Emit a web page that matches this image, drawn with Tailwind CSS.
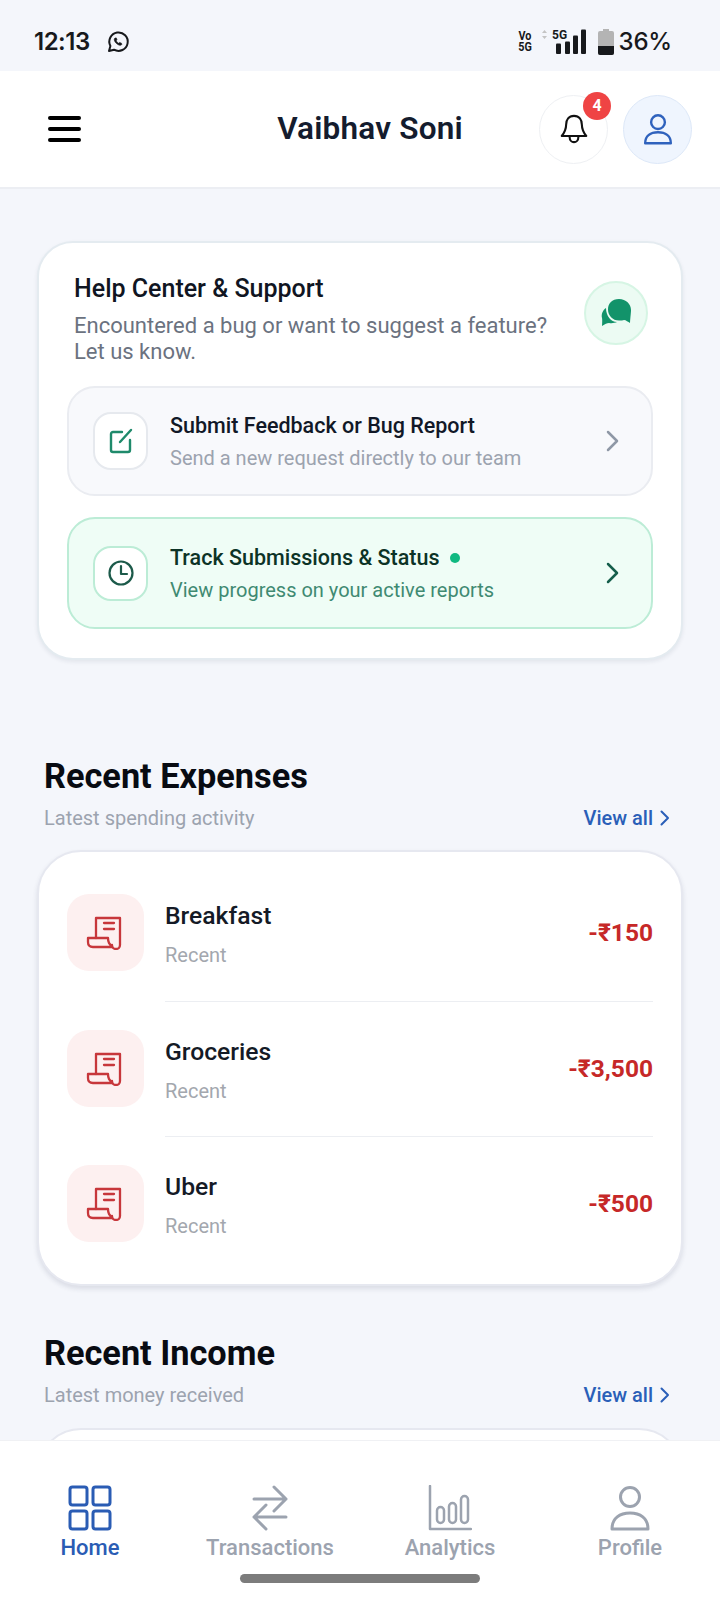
<!DOCTYPE html>
<html>
<head>
<meta charset="utf-8">
<script src="https://cdn.jsdelivr.net/npm/@tailwindcss/browser@4"></script>
</head>
<body class="m-0">
<div class="w-[720px] h-[1600px] flex flex-col overflow-hidden bg-[#f4f6fb] font-['Roboto',sans-serif]">
  <!-- status bar -->
  <div class="h-[71px] shrink-0 flex items-center justify-between pl-[34px] pr-[48px] pt-[12px] text-[#17191c]">
    <div class="flex items-center gap-[16px]">
      <span class="text-[24px] font-semibold font-['Inter',sans-serif] tracking-[-0.5px]">12:13</span>
      <svg width="24" height="24" viewBox="0 0 24 24" fill="none" stroke="#17191c" stroke-width="2"><path d="M3 21l1.400-5A9.200 9.200 0 1 1 8 19.700L3 21z" stroke-linejoin="round"/><path d="M9 8c-.8.6-1 1.600-.4 3 .7 1.600 2.300 3.200 4.200 4 1.300.5 2.400.3 3-.6l-.3-1.200-1.900-.8-.9.9c-1-.4-2-1.400-2.500-2.500l.8-1-.7-1.900z" fill="#17191c" stroke-width=".6"/></svg>
    </div>
    <div class="flex items-center">
      <div class="flex flex-col items-center text-[12px] leading-[11px] font-bold w-[14px] mr-[7px] scale-x-90"><span>Vo</span><span>5G</span></div>
      <svg width="48" height="30" viewBox="0 0 48 30" class="mr-[11px]"><path d="M3 6l2.500-3L8 6zM3 9l2.500 3L8 9z" fill="#c4c4c4"/><text x="13" y="11.500" font-size="12" font-weight="700" font-family="Roboto" fill="#17191c">5G</text><rect x="17" y="16.500" width="5" height="10.500" rx="1" fill="#17191c"/><rect x="26" y="14.500" width="5" height="12.500" rx="1" fill="#17191c"/><rect x="34" y="8.500" width="5" height="18.500" rx="1" fill="#17191c"/><rect x="42" y="2.500" width="5" height="24.500" rx="1" fill="#17191c"/></svg>
      <svg width="16" height="26" viewBox="0 0 16 26" class="mr-[5px]"><path d="M5 0h6v2h3a2 2 0 0 1 2 2v20a2 2 0 0 1-2 2H2a2 2 0 0 1-2-2V4a2 2 0 0 1 2-2h3z" fill="#b4b4b4"/><path d="M0 17h16v7a2 2 0 0 1-2 2H2a2 2 0 0 1-2-2z" fill="#17191c"/></svg>
      <span class="text-[24px] font-medium font-['Inter',sans-serif] tracking-[-0.2px]">36%</span>
    </div>
  </div>
  <!-- header -->
  <div class="h-[118px] shrink-0 bg-white border-b-2 border-[#eceef3] flex items-center pl-[48px] pr-[28px]">
    <div class="flex-1 min-w-0"><div class="w-[33px] flex flex-col gap-[7px]"><div class="h-[4px] rounded-full bg-black"></div><div class="h-[4px] rounded-full bg-black"></div><div class="h-[4px] rounded-full bg-black"></div></div></div>
    <div class="text-[31.500px] font-semibold text-[#141c2e] tracking-[0.2px] shrink-0">Vaibhav Soni</div>
    <div class="flex-1 min-w-0 flex items-center justify-end gap-[15px]">
      <div class="relative w-[69px] h-[69px] rounded-full bg-white border border-[#eef0f3] flex items-center justify-center shrink-0">
        <svg width="28" height="32" viewBox="0 0 32 34" fill="none" stroke="#111" stroke-width="2.400" stroke-linejoin="round" stroke-linecap="round"><path d="M16 2c-6 0-9 4.500-9 10 0 6-2 9-5 13h28c-3-4-5-7-5-13 0-5.500-3-10-9-10z"/><path d="M11 26c0 4 2.500 6 5 6s5-2 5-6"/></svg>
        <div class="absolute top-[-4px] right-[-4px] w-[28px] h-[28px] rounded-full bg-[#ef4444] flex items-center justify-center text-white text-[16px] font-bold">4</div>
      </div>
      <div class="w-[69px] h-[69px] rounded-full bg-[#eff5fe] border border-[#dde8f8] flex items-center justify-center shrink-0">
        <svg width="30" height="33" viewBox="0 0 32 36" fill="none" stroke="#2f62bd" stroke-width="2.600" stroke-linejoin="round"><circle cx="16" cy="10" r="7.500"/><path d="M2 33c0-8 6-12 14-12s14 4 14 12z"/></svg>
      </div>
    </div>
  </div>
  <!-- main -->
  <div class="flex-1 min-h-0 overflow-hidden px-[37px] pt-[52px]">
    <div class="h-[419px] w-[646px] rounded-[36px] bg-white border-2 border-[#e4ebf0] shadow-[0_2px_4px_rgba(30,40,70,0.08)] px-[28px] pt-[30px]">
      <div class="flex justify-between pl-[7px] pr-[5px]">
        <div>
          <div class="text-[25px] leading-[32px] font-medium text-[#101522]">Help Center &amp; Support</div>
          <div class="text-[22px] leading-[26px] text-[#6b7280] mt-[8px]">Encountered a bug or want to suggest a feature?<br>Let us know.</div>
        </div>
        <div class="w-[64px] h-[64px] mt-[8px] rounded-full bg-[#ecfbf3] border-2 border-[#d6f5e4] flex items-center justify-center">
          <svg width="32" height="30" viewBox="0 0 32 30"><path d="M6 10c-3 2-5 6-4 10 .3 1 .3 4 0 8 3-2 5-3 7-3 3 .5 6 0 8-1-6 0-11-6-11-14z" fill="#12936a"/><path d="M19 1c7 0 12 5 12 11 0 3-.5 6-1 13-2-1-4-3-6-3-1 .5-3 .5-5 .5-6.500 0-11-5-11-11S12 1 19 1z" fill="#12936a"/></svg>
        </div>
      </div>
      <div class="mt-[21px] h-[110px] rounded-[28px] bg-[#f8f9fc] border-2 border-[#eaecf1] flex items-center pl-[24px] pr-[31px]">
        <div class="w-[55px] h-[58px] rounded-[18px] bg-white border-2 border-[#e6e9ee] flex items-center justify-center shrink-0">
          <svg width="28" height="28" viewBox="0 0 28 28" fill="none" stroke="#1f8a6b" stroke-width="2.400" stroke-linecap="round" stroke-linejoin="round"><path d="M15 5H6a2 2 0 0 0-2 2v16a2 2 0 0 0 2 2h15a2 2 0 0 0 2-2V13"/><path d="M13 15L24 3"/></svg>
        </div>
        <div class="ml-[22px] flex-1">
          <div class="text-[21.500px] leading-[26px] font-medium text-[#111827]">Submit Feedback or Bug Report</div>
          <div class="text-[20px] leading-[24px] text-[#9ca3af] mt-[7px]">Send a new request directly to our team</div>
        </div>
        <svg width="14" height="22" viewBox="0 0 14 22" fill="none" stroke="#8f98a6" stroke-width="2.500" stroke-linecap="round" stroke-linejoin="round"><path d="M2 2l9 9-9 9"/></svg>
      </div>
      <div class="mt-[21px] h-[112px] rounded-[28px] bg-[#effdf6] border-2 border-[#bcecd6] flex items-center pl-[24px] pr-[31px]">
        <div class="w-[55px] h-[55px] rounded-[18px] bg-white border-2 border-[#bcecd6] flex items-center justify-center shrink-0">
          <svg width="28" height="28" viewBox="0 0 28 28" fill="none" stroke="#1c5a4a" stroke-width="2.200" stroke-linecap="round" stroke-linejoin="round"><circle cx="14" cy="14" r="11.500"/><path d="M14 7v8h6"/></svg>
        </div>
        <div class="ml-[22px] flex-1">
          <div class="flex items-center text-[21.500px] leading-[26px] font-medium text-[#0c3326]">Track Submissions &amp; Status<span class="ml-[11px] w-[10px] h-[10px] rounded-full bg-[#10b981]"></span></div>
          <div class="text-[20px] leading-[24px] text-[#3f8a72] mt-[7px]">View progress on your active reports</div>
        </div>
        <svg width="14" height="22" viewBox="0 0 14 22" fill="none" stroke="#155e4b" stroke-width="2.500" stroke-linecap="round" stroke-linejoin="round"><path d="M2 2l9 9-9 9"/></svg>
      </div>
    </div>

    <div class="mt-[94px] pl-[7px] pr-[13px]">
      <div class="text-[34.300px] leading-[44px] font-bold text-[#080b12]">Recent Expenses</div>
      <div class="flex items-center justify-between mt-[8px]">
        <span class="text-[20px] leading-[24px] text-[#9ca3af]">Latest spending activity</span>
        <span class="flex items-center gap-[7px] text-[20px] leading-[24px] font-medium text-[#2a5fb8]">View all<svg width="10" height="16" viewBox="0 0 10 16" fill="none" stroke="#2a5fb8" stroke-width="2" stroke-linecap="round" stroke-linejoin="round"><path d="M1.500 1.500L8 8l-6.500 6.500"/></svg></span>
      </div>
    </div>
    <div class="mt-[20px] h-[436px] w-[646px] rounded-[44px] bg-white border-2 border-[#e6e8f0] shadow-[0_3px_5px_rgba(30,40,70,0.12)] px-[28px] pt-[42px]">
      <div class="h-[108px] flex items-start">
        <div class="w-[77px] h-[77px] rounded-[22px] bg-[#fdf0f0] flex items-center justify-center shrink-0 pr-[3px]">
          <svg width="36" height="34" viewBox="0 0 36 34" fill="none" stroke="#c7373b" stroke-width="2.300" stroke-linejoin="round" stroke-linecap="round"><path d="M10 22V2h24v27a4 4 0 0 1-8 0"/><path d="M2 22h20c0 2 0 3 1 5l3 4H7c-3 0-5-2-5-5z"/><path d="M18 7h10M18 13h10"/></svg>
        </div>
        <div class="ml-[21px] flex-1 pt-[6px] self-stretch border-b border-[#eceef2]"><div class="flex justify-between"><div class="text-[24.700px] leading-[32px] font-medium text-[#141a26]">Breakfast</div><div class="text-[24.500px] leading-[32px] font-bold text-[#c62828] mt-[17px]">-₹150</div></div><div class="text-[20px] leading-[24px] text-[#a3a7ae] mt-[-6px]">Recent</div></div>
      </div>
      <div class="h-[135px] pt-[28px] flex items-start">
        <div class="w-[77px] h-[77px] rounded-[22px] bg-[#fdf0f0] flex items-center justify-center shrink-0 pr-[3px]">
          <svg width="36" height="34" viewBox="0 0 36 34" fill="none" stroke="#c7373b" stroke-width="2.300" stroke-linejoin="round" stroke-linecap="round"><path d="M10 22V2h24v27a4 4 0 0 1-8 0"/><path d="M2 22h20c0 2 0 3 1 5l3 4H7c-3 0-5-2-5-5z"/><path d="M18 7h10M18 13h10"/></svg>
        </div>
        <div class="ml-[21px] flex-1 pt-[6px] self-stretch border-b border-[#eceef2]"><div class="flex justify-between"><div class="text-[24.700px] leading-[32px] font-medium text-[#141a26]">Groceries</div><div class="text-[24.500px] leading-[32px] font-bold text-[#c62828] mt-[17px]">-₹3,500</div></div><div class="text-[20px] leading-[24px] text-[#a3a7ae] mt-[-6px]">Recent</div></div>
      </div>
      <div class="pt-[28px] flex items-start">
        <div class="w-[77px] h-[77px] rounded-[22px] bg-[#fdf0f0] flex items-center justify-center shrink-0 pr-[3px]">
          <svg width="36" height="34" viewBox="0 0 36 34" fill="none" stroke="#c7373b" stroke-width="2.300" stroke-linejoin="round" stroke-linecap="round"><path d="M10 22V2h24v27a4 4 0 0 1-8 0"/><path d="M2 22h20c0 2 0 3 1 5l3 4H7c-3 0-5-2-5-5z"/><path d="M18 7h10M18 13h10"/></svg>
        </div>
        <div class="ml-[21px] flex-1 pt-[6px]"><div class="flex justify-between"><div class="text-[24.700px] leading-[32px] font-medium text-[#141a26]">Uber</div><div class="text-[24.500px] leading-[32px] font-bold text-[#c62828] mt-[17px]">-₹500</div></div><div class="text-[20px] leading-[24px] text-[#a3a7ae] mt-[-6px]">Recent</div></div>
      </div>
    </div>

    <div class="mt-[45px] pl-[7px] pr-[13px]">
      <div class="text-[34.300px] leading-[44px] font-bold text-[#080b12]">Recent Income</div>
      <div class="flex items-center justify-between mt-[8px]">
        <span class="text-[20px] leading-[24px] text-[#9ca3af]">Latest money received</span>
        <span class="flex items-center gap-[7px] text-[20px] leading-[24px] font-medium text-[#2a5fb8]">View all<svg width="10" height="16" viewBox="0 0 10 16" fill="none" stroke="#2a5fb8" stroke-width="2" stroke-linecap="round" stroke-linejoin="round"><path d="M1.500 1.500L8 8l-6.500 6.500"/></svg></span>
      </div>
    </div>
    <div class="mt-[21px] h-[200px] w-[646px] rounded-[44px] bg-white border-2 border-[#e6e8f0]"></div>
  </div>
  <!-- bottom nav -->
  <div class="h-[160px] shrink-0 bg-white border-t border-[#f0f1f4] flex flex-col items-center relative z-10">
    <div class="w-full grid grid-cols-4 pt-[44px]">
      <div class="flex flex-col items-center">
        <svg width="44" height="46" viewBox="0 0 44 46" fill="none" stroke="#2a5cb4" stroke-width="3"><rect x="2" y="2" width="17" height="18" rx="2.500"/><rect x="25" y="2" width="17" height="18" rx="2.500"/><rect x="2" y="26" width="17" height="18" rx="2.500"/><rect x="25" y="26" width="17" height="18" rx="2.500"/></svg>
        <span class="mt-[3px] text-[22px] leading-[28px] font-medium text-[#2a5cb4]">Home</span>
      </div>
      <div class="flex flex-col items-center">
        <svg width="36" height="46" viewBox="0 0 36 46" fill="none" stroke="#9ca3af" stroke-width="3" stroke-linecap="round" stroke-linejoin="round"><path d="M2 14h32M22 2l12 12-12 12"/><path d="M34 32H2M14 20L2 32l12 12"/></svg>
        <span class="mt-[3px] text-[22px] leading-[28px] font-medium text-[#9ca3af]">Transactions</span>
      </div>
      <div class="flex flex-col items-center">
        <svg width="44" height="46" viewBox="0 0 44 46" fill="none" stroke="#9ca3af" stroke-width="2.500" stroke-linecap="round" stroke-linejoin="round"><path d="M2 1v43h41"/><rect x="9" y="22" width="7" height="16" rx="3.500"/><rect x="21" y="18" width="7" height="20" rx="3.500"/><rect x="33" y="11" width="7" height="27" rx="3.500"/></svg>
        <span class="mt-[3px] text-[22px] leading-[28px] font-medium text-[#9ca3af]">Analytics</span>
      </div>
      <div class="flex flex-col items-center">
        <svg width="40" height="46" viewBox="0 0 40 46" fill="none" stroke="#9ca3af" stroke-width="3" stroke-linejoin="round"><circle cx="20" cy="12" r="9.500"/><path d="M2 44c0-11 8-16 18-16s18 5 18 16z"/></svg>
        <span class="mt-[3px] text-[22px] leading-[28px] font-medium text-[#9ca3af]">Profile</span>
      </div>
    </div>
    <div class="mt-[12px] w-[240px] h-[9px] rounded-full bg-[#7c7c7c]"></div>
  </div>
</div>
</body>
</html>
